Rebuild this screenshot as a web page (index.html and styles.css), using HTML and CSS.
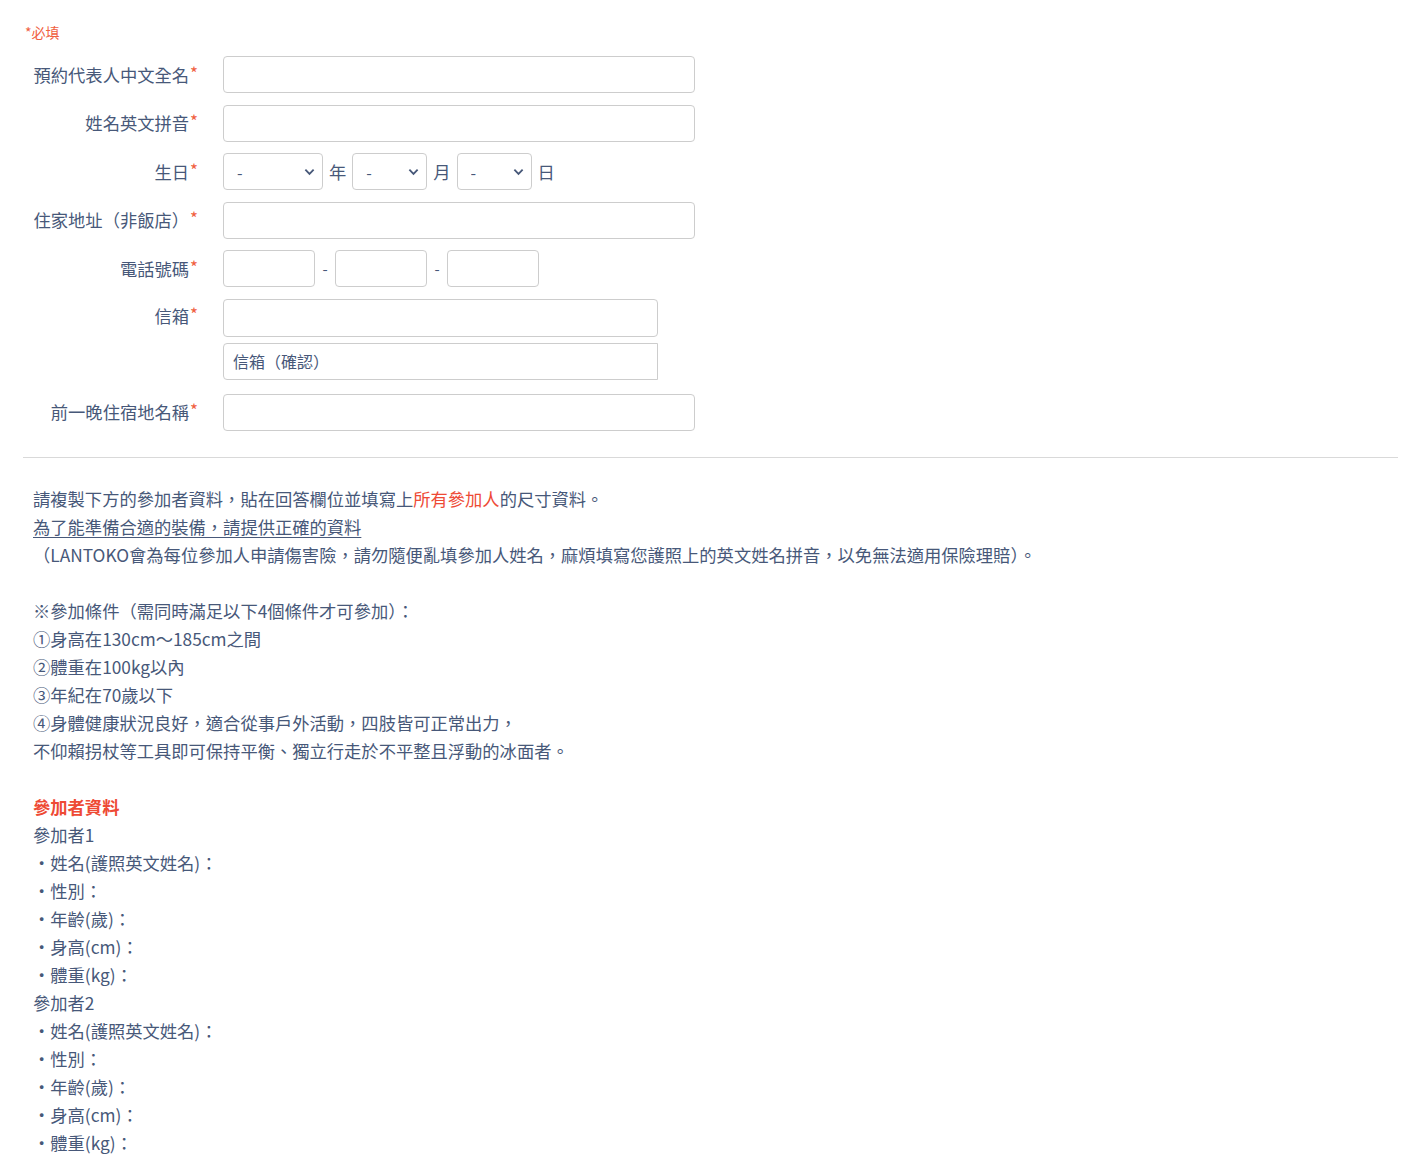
FILE: index.html
```html
<!DOCTYPE html>
<html lang="zh-Hant">
<head>
    <meta charset="UTF-8">
    <meta name="viewport" content="width=device-width, initial-scale=1.0">
    <title>預約資料</title>
    <link rel="stylesheet" href="styles.css">
</head>
<body>
    <div class="page">
        <p class="required-note">*必填</p>

        <form class="booking-form">
            <div class="form-row">
                <label class="form-label">預約代表人中文全名<span class="req">*</span></label>
                <input class="field field-wide" type="text">
            </div>
            <div class="form-row">
                <label class="form-label">姓名英文拼音<span class="req">*</span></label>
                <input class="field field-wide" type="text">
            </div>
            <div class="form-row">
                <label class="form-label">生日<span class="req">*</span></label>
                <div class="inline-group">
                    <div class="select-wrap select-year">
                        <select class="field select"><option>-</option></select>
                        <svg class="chevron" viewBox="0 0 12 8"><path d="M1.5 1.5 6 6l4.5-4.5" /></svg>
                    </div>
                    <span class="unit">年</span>
                    <div class="select-wrap">
                        <select class="field select"><option>-</option></select>
                        <svg class="chevron" viewBox="0 0 12 8"><path d="M1.5 1.5 6 6l4.5-4.5" /></svg>
                    </div>
                    <span class="unit">月</span>
                    <div class="select-wrap">
                        <select class="field select"><option>-</option></select>
                        <svg class="chevron" viewBox="0 0 12 8"><path d="M1.5 1.5 6 6l4.5-4.5" /></svg>
                    </div>
                    <span class="unit">日</span>
                </div>
            </div>
            <div class="form-row">
                <label class="form-label">住家地址（非飯店）<span class="req">*</span></label>
                <input class="field field-wide" type="text">
            </div>
            <div class="form-row">
                <label class="form-label">電話號碼<span class="req">*</span></label>
                <div class="inline-group phone-group">
                    <input class="field field-phone" type="text">
                    <span class="dash">-</span>
                    <input class="field field-phone" type="text">
                    <span class="dash">-</span>
                    <input class="field field-phone" type="text">
                </div>
            </div>
            <div class="form-row form-row-top">
                <label class="form-label">信箱<span class="req">*</span></label>
                <div class="email-group">
                    <input class="field field-email" type="text">
                    <input class="field field-email field-confirm" type="text" placeholder="信箱（確認）">
                </div>
            </div>
            <div class="form-row form-row-last">
                <label class="form-label">前一晚住宿地名稱<span class="req">*</span></label>
                <input class="field field-wide" type="text">
            </div>
        </form>

        <hr class="divider">

        <div class="notice">
            <p>請複製下方的參加者資料，貼在回答欄位並填寫上<span class="red">所有參加人</span>的尺寸資料。</p>
            <p><u>為了能準備合適的裝備，請提供正確的資料</u></p>
            <p>（LANTOKO會為每位參加人申請傷害險，請勿隨便亂填參加人姓名，麻煩填寫您護照上的英文姓名拼音，以免無法適用保險理賠）。</p>
            <p class="blank"></p>
            <p>※參加條件（需同時滿足以下4個條件才可參加）：</p>
            <p>①身高在130cm～185cm之間</p>
            <p>②體重在100kg以內</p>
            <p>③年紀在70歲以下</p>
            <p>④身體健康狀況良好，適合從事戶外活動，四肢皆可正常出力，</p>
            <p>不仰賴拐杖等工具即可保持平衡、獨立行走於不平整且浮動的冰面者。</p>
            <p class="blank"></p>
            <p class="red bold">參加者資料</p>
            <p>參加者1</p>
            <p>・姓名(護照英文姓名)：</p>
            <p>・性別：</p>
            <p>・年齡(歲)：</p>
            <p>・身高(cm)：</p>
            <p>・體重(kg)：</p>
            <p>參加者2</p>
            <p>・姓名(護照英文姓名)：</p>
            <p>・性別：</p>
            <p>・年齡(歲)：</p>
            <p>・身高(cm)：</p>
            <p>・體重(kg)：</p>
        </div>
    </div>
</body>
</html>
```

FILE: styles.css
```css
body {
    margin: 0;
    background: #fff;
    color: #475879;
    font-family: "Noto Sans CJK TC", "Noto Sans", sans-serif;
    font-size: 17.3px;
}

.page {
    padding: 20px 19px 20px 23px;
}

.required-note {
    margin: 0 0 12px 2px;
    font-size: 14px;
    line-height: 24px;
    color: #f0603f;
}

.booking-form {
    display: flex;
    flex-direction: column;
    gap: 11.6px;
}

.form-row {
    display: flex;
    align-items: center;
    gap: 25px;
}

.form-row-top {
    align-items: flex-start;
}

.form-row-top .form-label {
    line-height: 34px;
}

.form-row-last {
    margin-top: 2px;
}

.form-label {
    width: 175px;
    flex-shrink: 0;
    text-align: right;
    line-height: 24px;
}

.req {
    color: #f0603f;
    font-size: 17px;
    position: relative;
    top: -2px;
    margin-left: 1px;
}

.field {
    box-sizing: border-box;
    height: 37px;
    border: 1px solid #cdcdcd;
    border-radius: 4px;
    background: #fff;
    font-family: inherit;
    font-size: 16px;
    color: #475879;
    padding: 0 9px;
    margin: 0;
    outline: none;
}

.field-wide {
    width: 472px;
}

.inline-group {
    display: flex;
    align-items: center;
    gap: 5px;
}

.unit {
    margin: 0 1px;
}

.select-wrap {
    position: relative;
    width: 75px;
}

.select-wrap.select-year {
    width: 100px;
}

.select {
    width: 100%;
    appearance: none;
    -webkit-appearance: none;
    padding-left: 13px;
    cursor: pointer;
}

.chevron {
    position: absolute;
    right: 8px;
    top: 15px;
    width: 11px;
    height: 8px;
    fill: none;
    stroke: #475879;
    stroke-width: 2;
    pointer-events: none;
}

.phone-group {
    gap: 7px;
}

.field-phone {
    width: 92px;
}

.dash {
    width: 6px;
    font-size: 15px;
    text-align: center;
}

.email-group {
    display: flex;
    flex-direction: column;
    gap: 6px;
}

.field-email {
    width: 435px;
    height: 38px;
}

.field-confirm {
    height: 37px;
    border-radius: 4px 0 0 4px;
}

.field-confirm::placeholder {
    color: #475879;
    opacity: 1;
}

.divider {
    border: none;
    border-top: 1px solid #d9d9d9;
    margin: 26px 0 27px;
}

.notice {
    padding-left: 10px;
}

.notice p {
    margin: 0;
    line-height: 28px;
    min-height: 28px;
}

.red {
    color: #ee4a35;
}

.bold {
    font-weight: bold;
}

u {
    text-underline-offset: 3px;
}
```
